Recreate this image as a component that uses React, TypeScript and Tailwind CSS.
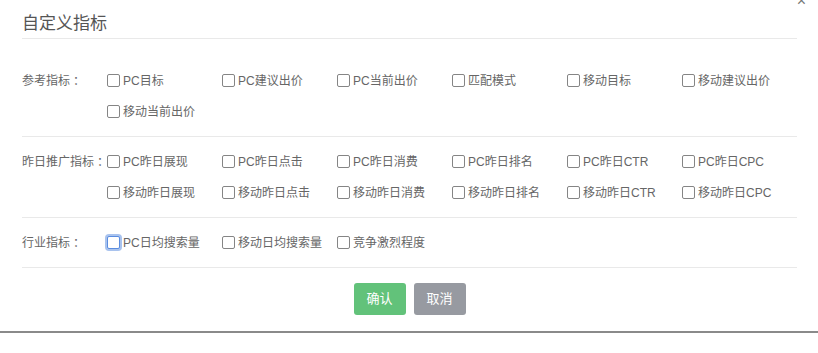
import React from "react";

const font = { fontFamily: '"Liberation Sans", "Noto Sans CJK SC", sans-serif' };
const colonFont = { fontFamily: '"Noto Sans CJK JP", sans-serif' };

interface Group {
  label: string;
  items: string[];
}

const GROUPS: Group[] = [
  {
    label: "参考指标",
    items: ["PC目标", "PC建议出价", "PC当前出价", "匹配模式", "移动目标", "移动建议出价", "移动当前出价"],
  },
  {
    label: "昨日推广指标",
    items: [
      "PC昨日展现",
      "PC昨日点击",
      "PC昨日消费",
      "PC昨日排名",
      "PC昨日CTR",
      "PC昨日CPC",
      "移动昨日展现",
      "移动昨日点击",
      "移动昨日消费",
      "移动昨日排名",
      "移动昨日CTR",
      "移动昨日CPC",
    ],
  },
  {
    label: "行业指标",
    items: ["PC日均搜索量", "移动日均搜索量", "竞争激烈程度"],
  },
];

function Check({ text, focused }: { text: string; focused?: boolean }) {
  return (
    <label className="flex items-center h-[31px] w-[115px] text-[12px] text-[#666]">
      <span
        className={
          focused
            ? "w-[13px] h-[13px] rounded-[2px] border border-[#5b8de0] ring-2 ring-[#a9c3ee] bg-white"
            : "w-[13px] h-[13px] rounded-[2px] border border-[#858585] bg-white"
        }
      />
      <span className="ml-[3px] whitespace-nowrap">{text}</span>
    </label>
  );
}

export default function App() {
  return (
    <div className="w-[818px] h-[353px] bg-white overflow-hidden relative" style={font}>
      {/* close button, mostly cut off above the viewport */}
      <span className="absolute right-[12px] top-[-7px] text-[16px] leading-[16px] text-[#777]">×</span>

      <div className="border-b-2 border-[#8a8a8a] pl-[22px] pr-[21px]">
        <div className="h-[39px] flex items-center border-b border-[#e9e9e9] pt-[10px]">
          <h3 className="text-[17px] text-[#555] font-normal">自定义指标</h3>
        </div>

        <div className="mt-[17px]">
          {GROUPS.map((g) => (
            <div key={g.label} className="flex py-[9px] border-b border-[#e9e9e9]">
              <div className="w-[85px] h-[31px] flex items-center text-[12px] text-[#666] whitespace-nowrap">
                {g.label}
                <span style={colonFont}>：</span>
              </div>
              <div className="flex flex-wrap w-[690px]">
                {g.items.map((it) => (
                  <Check key={it} text={it} focused={it === "PC日均搜索量"} />
                ))}
              </div>
            </div>
          ))}
        </div>

        <div className="flex justify-center gap-[8px] pt-[15px] pb-[16px]">
          <button className="w-[52px] h-[32px] rounded-[3px] bg-[#62c27a] text-white text-[13px]">确认</button>
          <button className="w-[52px] h-[32px] rounded-[3px] bg-[#979aa1] text-white text-[13px]">取消</button>
        </div>
      </div>
    </div>
  );
}
